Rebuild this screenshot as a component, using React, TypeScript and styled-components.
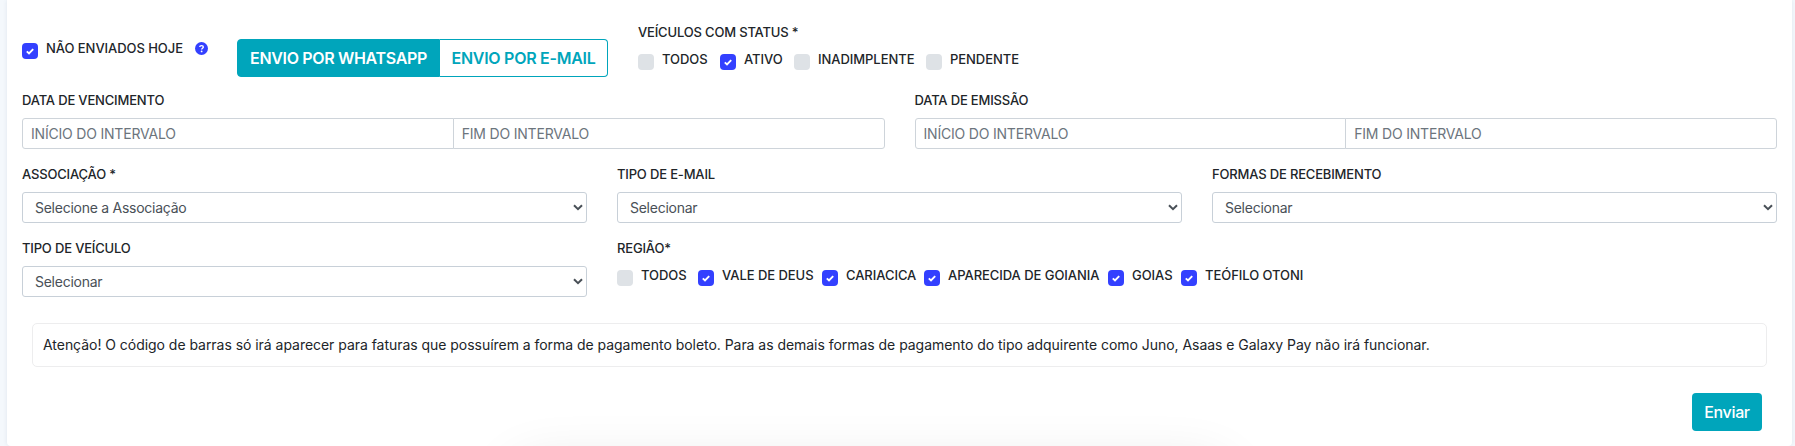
import React from "react";
import styled, { createGlobalStyle } from "styled-components";

const GlobalStyle = createGlobalStyle`
  *, *::before, *::after { box-sizing: border-box; }
  html, body { margin: 0; height: 100%; overflow: hidden; }
  body {
    background: #f4f8fc;
    color: #212529;
    font-family: Inter, "Liberation Sans", sans-serif;
    font-size: 14px;
    line-height: 1.5;
  }
`;

const Page = styled.div`
  position: relative;
  height: 446px;
  padding: 0 3px 0 7px;
  overflow: hidden;
`;

const Card = styled.form`
  height: 446px;
  padding: 23px 15px 0;
  background: #fff;
  border-radius: 0 0 4px 4px;
  box-shadow: 0 0 4px rgba(40, 70, 110, 0.1);
`;

const TopRow = styled.div`
  display: flex;
  align-items: flex-start;
  height: 67px;
`;

const Row = styled.div<{ $columns: number; $height: number }>`
  display: grid;
  grid-template-columns: repeat(${(p) => p.$columns}, minmax(0, 1fr));
  column-gap: 30px;
  height: ${(p) => p.$height}px;
`;

const Field = styled.div<{ $span?: number }>`
  grid-column: span ${(p) => p.$span ?? 1};
  min-width: 0;
`;

const Label = styled.div<{ $gap?: number; $line?: number }>`
  height: 20px;
  margin-bottom: ${(p) => p.$gap ?? 7}px;
  font-size: 13px;
  font-weight: 500;
  line-height: ${(p) => p.$line ?? 18}px;
  letter-spacing: -0.17px;
  white-space: nowrap;
`;

const NotSent = styled.div`
  display: flex;
  width: 215px;
  padding-top: 16px;
`;

const HelpIcon = styled.svg`
  width: 13px;
  height: 13px;
  margin: 3px 0 0 12px;
`;

const StatusGroup = styled.div`
  margin-left: 30px;
`;

const CheckList = styled.div<{ $gap: number }>`
  display: flex;
  gap: ${(p) => p.$gap}px;
`;

const CheckLabel = styled.label`
  display: flex;
  gap: 8px;
  font-size: 13px;
  font-weight: 500;
  line-height: 18px;
  letter-spacing: -0.05px;
  white-space: nowrap;
`;

const CheckText = styled.span<{ $width?: number }>`
  width: ${(p) => (p.$width ? `${p.$width}px` : "auto")};
`;

const Box = styled.span<{ $on: boolean }>`
  display: grid;
  flex: none;
  place-items: center;
  width: 16px;
  height: 16px;
  margin-top: 4px;
  border-radius: 4px;
  background: ${(p) => (p.$on ? "#3340ff" : "#dee2e6")};
`;

const ButtonGroup = styled.div`
  display: flex;
  width: 371px;
  height: 38px;
  margin-top: 16px;
`;

const Toggle = styled.button<{ $active?: boolean }>`
  width: ${(p) => (p.$active ? 203 : 168)}px;
  padding: 0;
  border: 1px solid #00a5bb;
  border-left-width: ${(p) => (p.$active ? 1 : 0)}px;
  border-radius: ${(p) => (p.$active ? "4px 0 0 4px" : "0 4px 4px 0")};
  background: ${(p) => (p.$active ? "#00a5bb" : "#fff")};
  color: ${(p) => (p.$active ? "#fff" : "#00a5bb")};
  font: 600 16px/24px Inter, sans-serif;
  letter-spacing: ${(p) => (p.$active ? -0.34 : -0.28)}px;
  white-space: nowrap;
`;

const InputPair = styled.div`
  display: flex;
`;

const Input = styled.input`
  flex: 1;
  min-width: 0;
  height: 31px;
  padding: 4px 8px;
  border: 1px solid #ced4da;
  border-radius: 3px 0 0 3px;
  background: #fff;
  color: #495057;
  font: 400 14px/21px Inter, sans-serif;
  letter-spacing: -0.2px;
  & + & {
    margin-left: -1px;
    border-radius: 0 3px 3px 0;
  }
  &::placeholder { color: #6c757d; opacity: 1; }
`;

const SelectShell = styled.div`
  display: grid;
  align-items: center;
  & > * { grid-area: 1 / 1; }
`;

const NativeSelect = styled.select`
  width: 100%;
  height: 31px;
  padding: 4px 12px;
  border: 1px solid #c8d0d8;
  border-radius: 3px;
  appearance: none;
  background: #fff;
  color: #495057;
  font: 400 14px/21px Inter, sans-serif;
  letter-spacing: -0.26px;
`;

const Chevron = styled.svg`
  justify-self: end;
  width: 10px;
  height: 7px;
  margin-right: 4px;
  pointer-events: none;
`;

const Notice = styled.div`
  height: 44px;
  margin: 0 10px;
  padding: 0 10px;
  border: 1px solid #ededee;
  border-radius: 5px;
  line-height: 42px;
  letter-spacing: -0.038px;
  white-space: nowrap;
`;

const Actions = styled.div`
  display: flex;
  justify-content: flex-end;
  padding: 26px 15px 0;
`;

const Submit = styled.button`
  width: 70px;
  height: 38px;
  padding: 0;
  border: 0;
  border-radius: 4px;
  background: #00a5bb;
  color: #fff;
  font: 500 16px/24px Inter, sans-serif;
  letter-spacing: -0.35px;
`;

const FloatingShadow = styled.div`
  position: absolute;
  top: 466px;
  left: 515px;
  width: 710px;
  height: 80px;
  border-radius: 20px;
  box-shadow: 0 0 56px rgba(0, 0, 0, 0.12);
`;

function Check({ label, on = false, width }: { label: string; on?: boolean; width?: number }) {
  return (
    <CheckLabel>
      <Box $on={on}>
        {on && (
          <svg width="8" height="7" viewBox="0 0 8 7" fill="none">
            <path d="M0.8 3.4 3 5.5 7.2 1.2" stroke="#fff" strokeWidth="1.9" />
          </svg>
        )}
      </Box>
      <CheckText $width={width}>{label}</CheckText>
    </CheckLabel>
  );
}

function Select({ label, value }: { label: string; value: string }) {
  return (
    <Field>
      <Label>{label}</Label>
      <SelectShell>
        <NativeSelect defaultValue={value} aria-label={label}>
          <option>{value}</option>
        </NativeSelect>
        <Chevron viewBox="0 0 10 7" fill="none">
          <path d="M1 1.2 5 5.2 9 1.2" stroke="#495057" strokeWidth="2" />
        </Chevron>
      </SelectShell>
    </Field>
  );
}

function DateRange({ label }: { label: string }) {
  return (
    <Field>
      <Label $gap={8} $line={20}>{label}</Label>
      <InputPair>
        <Input placeholder="INÍCIO DO INTERVALO" />
        <Input placeholder="FIM DO INTERVALO" />
      </InputPair>
    </Field>
  );
}

export default function App() {
  return (
    <>
      <GlobalStyle />
      <Page>
        <Card>
          <TopRow>
            <NotSent>
              <Check label="NÃO ENVIADOS HOJE" on />
              <HelpIcon viewBox="0 0 13 13">
                <circle cx="6.5" cy="6.5" r="6.5" fill="#3340ff" />
                <path d="M4.7 5C4.9 3.2 8.3 3.2 8.3 5.1 8.3 6.3 6.6 6.2 6.6 7.6" fill="none" stroke="#fff" strokeWidth="1.4" />
                <circle cx="6.6" cy="9.4" r="0.9" fill="#fff" />
              </HelpIcon>
            </NotSent>
            <ButtonGroup>
              <Toggle type="button" $active>ENVIO POR WHATSAPP</Toggle>
              <Toggle type="button">ENVIO POR E-MAIL</Toggle>
            </ButtonGroup>
            <StatusGroup>
              <Label>VEÍCULOS COM STATUS *</Label>
              <CheckList $gap={8}>
                <Check label="TODOS" width={50} />
                <Check label="ATIVO" on width={42} />
                <Check label="INADIMPLENTE" width={100} />
                <Check label="PENDENTE" />
              </CheckList>
            </StatusGroup>
          </TopRow>
          <Row $columns={2} $height={75}>
            <DateRange label="DATA DE VENCIMENTO" />
            <DateRange label="DATA DE EMISSÃO" />
          </Row>
          <Row $columns={3} $height={74}>
            <Select label="ASSOCIAÇÃO *" value="Selecione a Associação" />
            <Select label="TIPO DE E-MAIL" value="Selecionar" />
            <Select label="FORMAS DE RECEBIMENTO" value="Selecionar" />
          </Row>
          <Row $columns={3} $height={84}>
            <Select label="TIPO DE VEÍCULO" value="Selecionar" />
            <Field $span={2}>
              <Label>REGIÃO*</Label>
              <CheckList $gap={8}>
                <Check label="TODOS" width={49} />
                <Check label="VALE DE DEUS" on width={92} />
                <Check label="CARIACICA" on width={70} />
                <Check label="APARECIDA DE GOIANIA" on width={152} />
                <Check label="GOIAS" on width={41} />
                <Check label="TEÓFILO OTONI" on />
              </CheckList>
            </Field>
          </Row>
          <Notice>
            Atenção! O código de barras só irá aparecer para faturas que possuírem a forma de pagamento boleto. Para as demais formas de pagamento do tipo adquirente como Juno, Asaas e Galaxy Pay não irá funcionar.
          </Notice>
          <Actions>
            <Submit type="button">Enviar</Submit>
          </Actions>
        </Card>
        <FloatingShadow />
      </Page>
    </>
  );
}
